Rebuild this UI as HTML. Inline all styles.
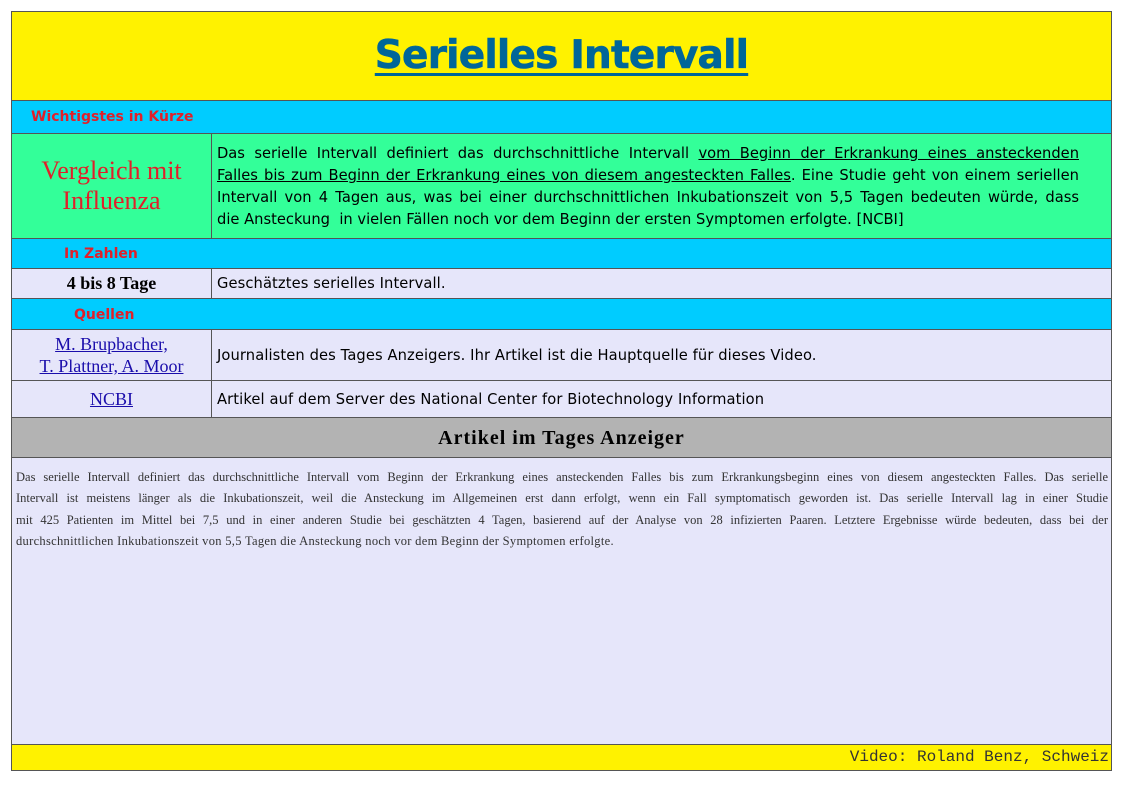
<!DOCTYPE html>
<html><head><meta charset="utf-8"><style>
*{margin:0;padding:0;box-sizing:border-box}
body{width:1123px;height:794px;background:#fff;position:relative;overflow:hidden}
.b{position:absolute;left:11px;width:1101px;border:1px solid #555;overflow:hidden}
.l{position:absolute;left:0;top:0;bottom:0;width:200px;border-right:1px solid #555;display:flex;align-items:center;justify-content:center;text-align:center}
.r{position:absolute;left:200px;right:0;top:0;bottom:0;padding:0 5px;display:flex;align-items:center;font-family:"DejaVu Sans",sans-serif;font-size:14.7px;letter-spacing:0.1px}
.h{font-family:"DejaVu Sans",sans-serif;font-weight:bold;color:#e0202a;font-size:14px;background:#00ccff}
.lav{background:#e6e6fa}
a{color:#1a0dab}
.j div{text-align:justify;text-align-last:justify;white-space:nowrap}
.j div.e{text-align-last:left}
</style></head><body>
<div class="b" style="top:11px;height:90px;background:#fff200;text-align:center">
<div style="font-family:'DejaVu Sans',sans-serif;font-weight:bold;font-size:39px;color:#006699;text-decoration:underline;text-decoration-thickness:3px;text-underline-offset:5px;margin-top:21px;letter-spacing:-0.8px;-webkit-text-stroke:0.6px #006699">Serielles Intervall</div></div>
<div class="b h" style="top:100px;height:34px;padding:8px 0 0 19px">Wichtigstes in Kürze</div>
<div class="b" style="top:133px;height:106px;background:#33ff99">
<div class="l" style="font-family:'Liberation Serif',serif;font-size:26px;color:#e0202a;line-height:30px">Vergleich mit<br>Influenza</div>
<div class="r j" style="line-height:22px;display:block;padding:9px 32px 0 5px;letter-spacing:0">
<div>Das serielle Intervall definiert das durchschnittliche Intervall <u>vom Beginn der Erkrankung eines ansteckenden</u></div>
<div><u>Falles bis zum Beginn der Erkrankung eines von diesem angesteckten Falles</u>. Eine Studie geht von einem seriellen</div>
<div>Intervall von 4 Tagen aus, was bei einer durchschnittlichen Inkubationszeit von 5,5 Tagen bedeuten würde, dass</div>
<div class="e">die Ansteckung&nbsp; in vielen Fällen noch vor dem Beginn der ersten Symptomen erfolgte. [NCBI]</div>
</div></div>
<div class="b h" style="top:238px;height:31px;padding:7px 0 0 52px">In Zahlen</div>
<div class="b lav" style="top:268px;height:31px">
<div class="l" style="font-family:'Liberation Serif',serif;font-weight:bold;font-size:18px">4 bis 8 Tage</div>
<div class="r">Geschätztes serielles Intervall.</div></div>
<div class="b h" style="top:298px;height:32px;padding:8px 0 0 62px">Quellen</div>
<div class="b lav" style="top:329px;height:52px">
<div class="l" style="font-family:'Liberation Serif',serif;font-size:18px;line-height:22px"><a style="text-decoration:underline">M. Brupbacher, <br>T. Plattner, A. Moor</a></div>
<div class="r">Journalisten des Tages Anzeigers. Ihr Artikel ist die Hauptquelle für dieses Video.</div></div>
<div class="b lav" style="top:380px;height:38px">
<div class="l" style="font-family:'Liberation Serif',serif;font-size:18px"><a style="text-decoration:underline">NCBI</a></div>
<div class="r">Artikel auf dem Server des National Center for Biotechnology Information</div></div>
<div class="b" style="top:417px;height:41px;background:#b3b3b3;text-align:center;font-family:'Liberation Serif',serif;font-weight:bold;font-size:20px;padding-top:9px;letter-spacing:1px">Artikel im Tages Anzeiger</div>
<div class="b lav j" style="top:457px;height:288px;padding:9px 3px 0 4px;font-family:'Liberation Serif',serif;font-size:12.5px;line-height:21.3px;color:#333">
<div>Das serielle Intervall definiert das durchschnittliche Intervall vom Beginn der Erkrankung eines ansteckenden Falles bis zum Erkrankungsbeginn eines von diesem angesteckten Falles. Das serielle</div>
<div>Intervall ist meistens länger als die Inkubationszeit, weil die Ansteckung im Allgemeinen erst dann erfolgt, wenn ein Fall symptomatisch geworden ist. Das serielle Intervall lag in einer Studie</div>
<div>mit 425 Patienten im Mittel bei 7,5 und in einer anderen Studie bei geschätzten 4 Tagen, basierend auf der Analyse von 28 infizierten Paaren. Letztere Ergebnisse würde bedeuten, dass bei der</div>
<div class="e" style="letter-spacing:0.3px">durchschnittlichen Inkubationszeit von 5,5 Tagen die Ansteckung noch vor dem Beginn der Symptomen erfolgte.</div>
</div>
<div class="b" style="top:744px;height:27px;background:#fff200;text-align:right;font-family:'Liberation Mono',monospace;font-size:16px;padding:3px 2px 0 0;color:#333">Video: Roland Benz, Schweiz</div>
</body></html>
